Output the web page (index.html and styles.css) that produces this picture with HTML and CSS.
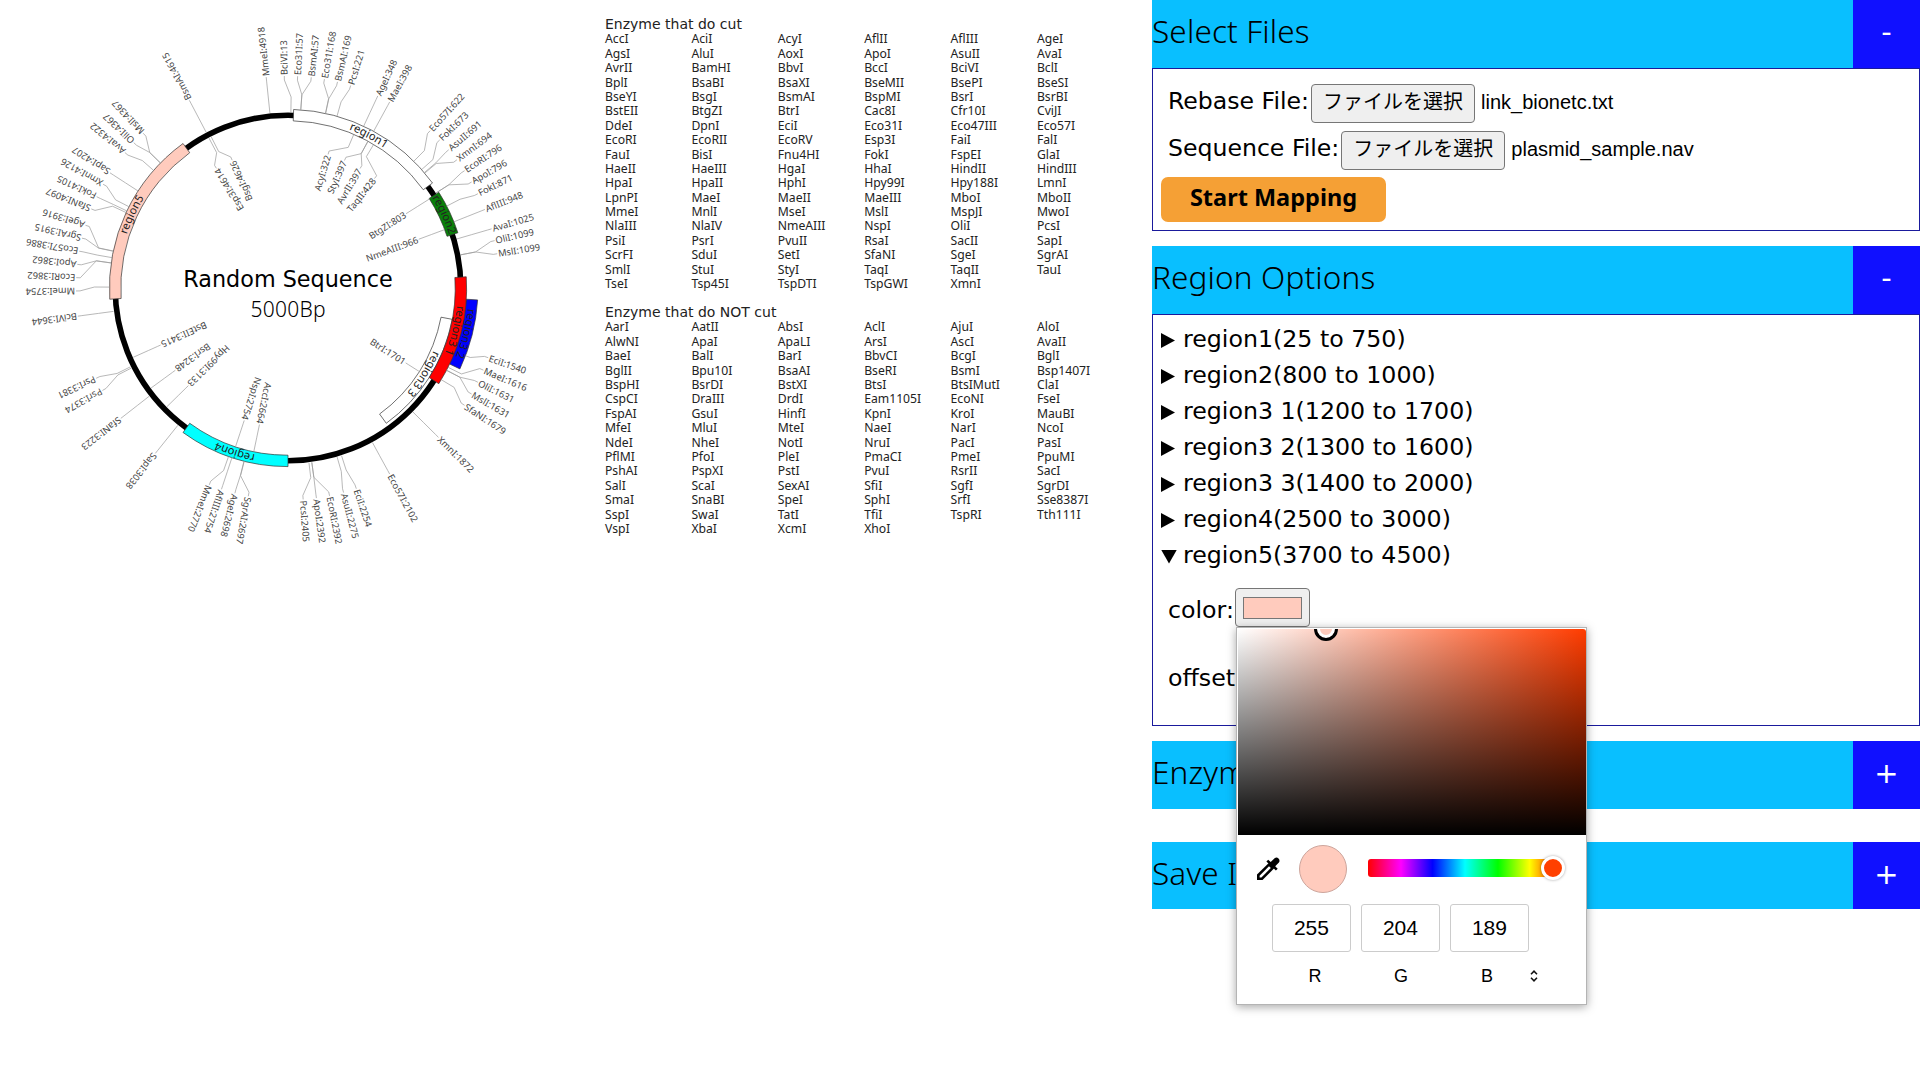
FILE: index.html
```html
<!DOCTYPE html>
<html lang="ja">
<head>
<meta charset="utf-8">
<title>Plasmid Map</title>
<link rel="stylesheet" href="styles.css">
</head>
<body>
<div class="app">
  <svg class="map" id="map" viewBox="0 0 590 580"></svg>

  <main class="enzymes">
    <h2 class="enzymes-title">Enzyme that do cut</h2>
    <div class="enzyme-grid" id="cut"></div>
    <h2 class="enzymes-title second">Enzyme that do NOT cut</h2>
    <div class="enzyme-grid" id="notcut"></div>
  </main>

  <aside class="side">
    <section class="files">
      <div class="bar"><span class="bar-title">Select Files</span><span class="toggle">-</span></div>
      <div class="panel files-panel">
        <div class="file-row"><span class="label">Rebase File:</span><button class="file-btn">ファイルを選択</button><span class="file-name">link_bionetc.txt</span></div>
        <div class="file-row"><span class="label">Sequence File:</span><button class="file-btn">ファイルを選択</button><span class="file-name">plasmid_sample.nav</span></div>
        <button class="start">Start Mapping</button>
      </div>
    </section>

    <section class="regions">
      <div class="bar"><span class="bar-title">Region Options</span><span class="toggle">-</span></div>
      <div class="panel regions-panel">
        <div class="region"><i class="tri"></i>region1(25 to 750)</div>
        <div class="region"><i class="tri"></i>region2(800 to 1000)</div>
        <div class="region"><i class="tri"></i>region3 1(1200 to 1700)</div>
        <div class="region"><i class="tri"></i>region3 2(1300 to 1600)</div>
        <div class="region"><i class="tri"></i>region3 3(1400 to 2000)</div>
        <div class="region"><i class="tri"></i>region4(2500 to 3000)</div>
        <div class="region"><i class="tri open"></i>region5(3700 to 4500)</div>
        <div class="color-row">
          <span>color:</span>
          <span class="swatch"><span class="swatch-fill"></span>
            <div class="picker">
              <div class="field"><span class="field-knob"></span></div>
              <div class="hue-row">
                <svg class="dropper" width="24" height="24" viewBox="0 0 24 24">
                  <path d="M1 23v-5.5L12.8 5.9l5.4 5.4L6.5 23z"/>
                  <path class="hollow" d="M3.6 20.4v-1.7l9.4-9.4 1.8 1.8-9.4 9.3z"/>
                  <path d="M10.4 4.6l1.8-1.8 2.5 2.3L18.6 1.3q2.1-1.5 3.9.3t.4 3.9L19.2 9.300l2.500 2.500-1.800 1.800z"/>
                </svg>
                <span class="preview"></span>
                <span class="hue"><span class="hue-knob"></span></span>
              </div>
              <div class="values"><span class="value">255</span><span class="value">204</span><span class="value">189</span></div>
              <div class="names"><span>R</span><span>G</span><span>B</span>
                <svg class="updown" width="8" height="12" viewBox="0 0 8 12"><path d="M1 4.300L4 1.200l3 3.100M1 7.700l3 3.100 3-3.100"/></svg>
              </div>
            </div>
          </span>
        </div>
        <div class="offset-row">offset:</div>
      </div>
    </section>

    <section class="bar enzyme-bar"><span class="bar-title">Enzyme Options</span><span class="toggle">+</span></section>
    <section class="bar save-bar"><span class="bar-title">Save Image</span><span class="toggle">+</span></section>
  </aside>
</div>
<script src="map.js"></script>
</body>
</html>
```
FILE: styles.css
```css
* { box-sizing: border-box; }
body {
  margin: 0;
  background: #fff;
  color: #000;
  font-family: "DejaVu Sans", "Noto Sans CJK JP", sans-serif;
  overflow: hidden;
}
.app { display: flex; height: 1080px; }

/* plasmid map */
.map { width: 590px; height: 580px; flex: none; }
.map .ring { fill: none; stroke: #000; stroke-width: 5.6; }
.map .band { stroke: #333; stroke-width: 0.7; }
.map .leader { fill: none; stroke: #999; stroke-width: 0.7; }
.map .site { font: 9.3px "Noto Sans", sans-serif; fill: #444; }
.map .band-name { font: 11.2px "Noto Sans", sans-serif; fill: #222; }
.map .name { font: 22.3px "DejaVu Sans", sans-serif; }
.map .size { font: 300 21px "Noto Sans", sans-serif; }

/* enzyme lists */
.enzymes { flex: none; width: 562px; padding: 17px 0 0 15px; }
.enzymes-title { margin: 0; font-size: 14px; font-weight: 400; line-height: 14.4px; color: #222; }
.enzymes-title.second { margin-top: 13.6px; }
.enzyme-grid {
  display: grid;
  grid-template-columns: repeat(6, 86.4px);
  grid-auto-rows: 14.4px;
  margin-top: 1px;
  font: 12.2px/14.4px "Noto Sans", sans-serif;
  color: #222;
}

/* side panel */
.side { flex: none; width: 768px; display: flex; flex-direction: column; }
.bar { display: flex; height: 68px; background: #09bfff; font: 300 31.5px/62px "Noto Sans", sans-serif; }
.bar-title { flex: 1; color: #000; letter-spacing: 0.15px; }
.toggle { width: 67px; background: #1010ff; color: #fff; text-align: center; font: 29px/65px "DejaVu Sans", sans-serif; }
.panel { border: 1px solid #1a1a9c; background: #fff; }
.files-panel { height: 163px; padding-top: 15px; }
.file-row { display: flex; height: 39px; margin: 0 0 8px 15px; font-size: 23.6px; line-height: 34px; }
.file-btn {
  width: 164px;
  height: 39px;
  margin-left: 2px;
  padding: 0 0 6px;
  border: 1px solid #767676;
  border-radius: 4px;
  background: #efefef;
  font: 20px "Noto Sans CJK JP", sans-serif;
  color: #000;
  white-space: nowrap;
}
.file-name { margin-left: 6px; font: 20px/37px "Liberation Sans", sans-serif; }
.start {
  display: block;
  width: 225px;
  height: 45px;
  margin: -1px 0 0 8px;
  padding: 0 0 6px;
  border: 0;
  border-radius: 7px;
  background: #f5a035;
  color: #000;
  font: 700 23.5px "Noto Sans", sans-serif;
}
.regions { margin-top: 15px; }
.regions-panel { height: 412px; padding-top: 6px; font-size: 23.7px; }
.region { display: flex; align-items: center; height: 36px; padding-left: 8px; line-height: 36px; }
.tri { width: 14px; height: 15px; margin: 3px 8px 0 0; background: #000; clip-path: polygon(0 0, 100% 50%, 0 100%); }
.tri.open { width: 16px; height: 14px; margin-right: 6px; clip-path: polygon(0 0, 100% 0, 50% 100%); }
.color-row { display: flex; height: 39px; margin: 15px 0 0 15px; line-height: 44px; }
.swatch {
  position: relative;
  width: 75px;
  height: 39px;
  margin-left: 1px;
  padding: 8px 7px;
  border: 1px solid #767676;
  border-radius: 4px;
  background: #efefef;
}
.swatch-fill { display: block; height: 22px; border: 1px solid #777; background: #ffcbbd; }
.offset-row { margin: 29px 0 0 15px; line-height: 45px; }
.enzyme-bar { margin-top: 15px; }
.save-bar { margin-top: 33px; height: 67px; }

/* colour picker popup */
.picker {
  position: absolute;
  z-index: 5;
  left: 0;
  top: 38px;
  width: 351px;
  height: 378px;
  padding: 1px 0 0 1px;
  border: 1px solid #b4b4b4;
  background: #fff;
  box-shadow: 0 2px 9px rgba(0, 0, 0, 0.35);
  font: 21px "Liberation Sans", sans-serif;
}
.field {
  position: relative;
  height: 206px;
  overflow: hidden;
  border-radius: 0 3px 0 0;
  background: linear-gradient(to top, #000, transparent), linear-gradient(to right, #fff, #ff3c00);
}
.field-knob {
  position: absolute;
  left: 76px;
  top: -12px;
  width: 24px;
  height: 24px;
  border: 3px solid #000;
  border-radius: 50%;
  background: #ffcbbd;
  box-shadow: inset 0 0 0 3px #fff;
}
.hue-row { display: flex; align-items: center; height: 68px; padding-left: 18px; }
.dropper .hollow { fill: #fff; }
.preview { width: 48px; height: 48px; margin-left: 19px; border: 1px solid #cda59c; border-radius: 50%; background: #ffcbbd; }
.hue {
  position: relative;
  width: 194px;
  height: 18px;
  margin: -2px 0 0 21px;
  border-radius: 3px;
  background: linear-gradient(to right, #f00, #f0f 17%, #00f 33.3%, #0ff 50%, #0f0 67%, #ff0 83.3%, #f00);
}
.hue-knob {
  position: absolute;
  left: 173px;
  top: -3px;
  width: 24px;
  height: 24px;
  border: 3px solid #fff;
  border-radius: 50%;
  background: #ff4000;
  box-shadow: 0 0 3px rgba(0, 0, 0, 0.35);
}
.values { display: flex; gap: 10px; padding: 1px 0 0 34px; }
.value { width: 79px; height: 48px; border: 1px solid #ccc; border-radius: 3px; text-align: center; line-height: 46px; }
.names { display: flex; align-items: center; height: 36px; margin-top: 6px; padding-left: 34px; font-size: 18px; line-height: 36px; }
.names span { width: 86px; text-align: center; }
.updown { margin-left: 0; }
.updown path { fill: none; stroke: #111; stroke-width: 1.5; }
```
FILE: map.js
```js
const NS = "http://www.w3.org/2000/svg";
const map = document.getElementById("map");
const C = 288, LEN = 5000;

function add(tag, attrs, text, parent = map) {
  const el = document.createElementNS(NS, tag);
  for (const k in attrs) el.setAttribute(k, attrs[k]);
  if (text) el.textContent = text;
  parent.appendChild(el);
  return el;
}
const deg = bp => bp / LEN * 360;
function pt(r, a) {
  const t = a * Math.PI / 180;
  return (C + r * Math.sin(t)).toFixed(2) + " " + (C - r * Math.cos(t)).toFixed(2);
}

add("circle", { class: "ring", cx: C, cy: C, r: 172.8 });

// name, start bp, end bp, inner radius, fill
const bands = [
  ["region1", 25, 750, 167.2, "#fff"],
  ["region2", 800, 1000, 167.2, "#0a800a"],
  ["region3 2", 1300, 1600, 178.6, "#00f"],
  ["region3 3", 1400, 2000, 155.8, "#fff"],
  ["region3 1", 1200, 1700, 167.2, "#f00"],
  ["region4", 2500, 3000, 167.2, "#0ff"],
  ["region5", 3700, 4500, 167.2, "#ffcbbd"]
];
bands.forEach(([name, s, e, r, fill], i) => {
  const a = deg(s), b = deg(e), R = r + 11.4, m = (a + b) / 2, t = r + 2.6;
  add("path", { class: "band", fill, d: `M${pt(r, a)}L${pt(R, a)}A${R} ${R} 0 0 1 ${pt(R, b)}L${pt(r, b)}A${r} ${r} 0 0 0 ${pt(r, a)}Z` });
  add("path", { id: "arc" + i, fill: "none", d: `M${pt(t, m - 30)}A${t} ${t} 0 0 1 ${pt(t, m + 30)}` });
});
bands.forEach(([name], i) => {
  const text = add("text", { class: "band-name", "text-anchor": "middle" });
  add("textPath", { href: "#arc" + i, startOffset: "50%" }, name, text);
});

// name:position, optional label angle when it is pushed aside
const outer = `MmeI:4918 BciVI:13@359 Eco31I:57@2.6 BsmAI:57@6.3 Eco31I:168@9.9 BsmAI:169@13.5 PcsI:221@17.2
AgeI:348 MaeI:398 Eco57I:622@42.1 FokI:673@45.7 AsuII:691@49.3 XmnI:694@52.8 EcoRI:796@56.4 ApoI:796@60 FokI:871@63.6
AflIII:948 AvaI:1025 OliI:1099@77.1 MslI:1099@80.7 EciI:1540@109.2 MaeI:1616@112.8 OliI:1631@116.4 MslI:1631@120
SfaNI:1679@123.6 XmnI:1872 Eco57I:2102 EciI:2254@161.2 AsuII:2275@164.8 EcoRI:2392@168.7 ApoI:2392@172.3 PcsI:2405@175.9
SgrAI:2697@190.8 AgeI:2698@194.5 AflIII:2754 MmeI:2770@201.8 SapI:3038 SfaNI:3223 PsrI:3374@241.1 PsrI:3381@244.8
BciVI:3644 MmeI:3754@269.2 EcoRI:3862@272.8 ApoI:3862@276.4 Eco57I:3886@280 SgrAI:3915@283.6 AgeI:3916@287.2
SfaNI:4097@291.9 FokI:4105@295.5 XmnI:4126@299.3 SapI:4207 AvaI:4322@309.7 OliI:4367@313.3 MslI:4367@316.9 BsmAI:4615`.split(/\s+/);
const inner = `AcyI:322@16.7 StyI:397@23.9 AvrII:397@31.1 TaqII:428@38.3 BtgZI:803 NmeAIII:966 BtrI:1701 AccI:2664
NspI:2754 Hpy99I:3133 BsrI:3248 BstEII:3415 Esp3I:4614@329.1 BsgI:4626@336.4`.split(/\s+/);

function edge(bp, out) {
  let r = out ? 176 : 169.5;
  for (const [, s, e, ir] of bands) if (bp >= s && bp <= e) r = out ? Math.max(r, ir + 11.4) : Math.min(r, ir);
  return bp === 1701 ? 155.8 : r;
}
function site(item, out) {
  const [label, at] = item.split("@");
  const bp = +label.split(":")[1], p = deg(bp), a = at ? +at : p;
  const rs = out ? [Math.min(edge(bp, out) + 15, 195), 208, 212] : [153, 143, 139.5];
  add("path", { class: "leader", d: `M${pt(edge(bp, out), p)}L${pt(rs[0], p)}L${pt(rs[1], a)}L${pt(rs[2], a)}` });
  const [x, y] = pt(out ? 213 : 138.5, a).split(" ");
  add("text", { class: "site", dy: 3.3, "text-anchor": out ? "start" : "end", transform: `translate(${x} ${y}) rotate(${a - 90})` }, label);
}
outer.forEach(s => site(s, true));
inner.forEach(s => site(s, false));

add("text", { class: "name", x: C, y: 287, "text-anchor": "middle" }, "Random Sequence");
add("text", { class: "size", x: C, y: 317, "text-anchor": "middle", textLength: 75 }, "5000Bp");

const cut = `AccI AciI AcyI AflII AflIII AgeI AgsI AluI AoxI ApoI AsuII AvaI AvrII BamHI BbvI BccI BciVI BclI
BplI BsaBI BsaXI BseMII BsePI BseSI BseYI BsgI BsmAI BspMI BsrI BsrBI BstEII BtgZI BtrI Cac8I Cfr10I CviJI
DdeI DpnI EciI Eco31I Eco47III Eco57I EcoRI EcoRII EcoRV Esp3I FaiI FalI FauI BisI Fnu4HI FokI FspEI GlaI
HaeII HaeIII HgaI HhaI HindII HindIII HpaI HpaII HphI Hpy99I Hpy188I LmnI LpnPI MaeI MaeII MaeIII MboI MboII
MmeI MnlI MseI MslI MspJI MwoI NlaIII NlaIV NmeAIII NspI OliI PcsI PsiI PsrI PvuII RsaI SacII SapI
ScrFI SduI SetI SfaNI SgeI SgrAI SmlI StuI StyI TaqI TaqII TauI TseI Tsp45I TspDTI TspGWI XmnI`;
const notcut = `AarI AatII AbsI AclI AjuI AloI AlwNI ApaI ApaLI ArsI AscI AvaII BaeI BalI BarI BbvCI BcgI BglI
BglII Bpu10I BsaAI BseRI BsmI Bsp1407I BspHI BsrDI BstXI BtsI BtsIMutI ClaI CspCI DraIII DrdI Eam1105I EcoNI FseI
FspAI GsuI HinfI KpnI KroI MauBI MfeI MluI MteI NaeI NarI NcoI NdeI NheI NotI NruI PacI PasI
PflMI PfoI PleI PmaCI PmeI PpuMI PshAI PspXI PstI PvuI RsrII SacI SalI ScaI SexAI SfiI SgfI SgrDI
SmaI SnaBI SpeI SphI SrfI Sse8387I SspI SwaI TatI TfiI TspRI Tth111I VspI XbaI XcmI XhoI`;
for (const [id, list] of [["cut", cut], ["notcut", notcut]]) {
  const grid = document.getElementById(id);
  for (const name of list.split(/\s+/)) {
    const cell = document.createElement("span");
    cell.textContent = name;
    grid.appendChild(cell);
  }
}
```
